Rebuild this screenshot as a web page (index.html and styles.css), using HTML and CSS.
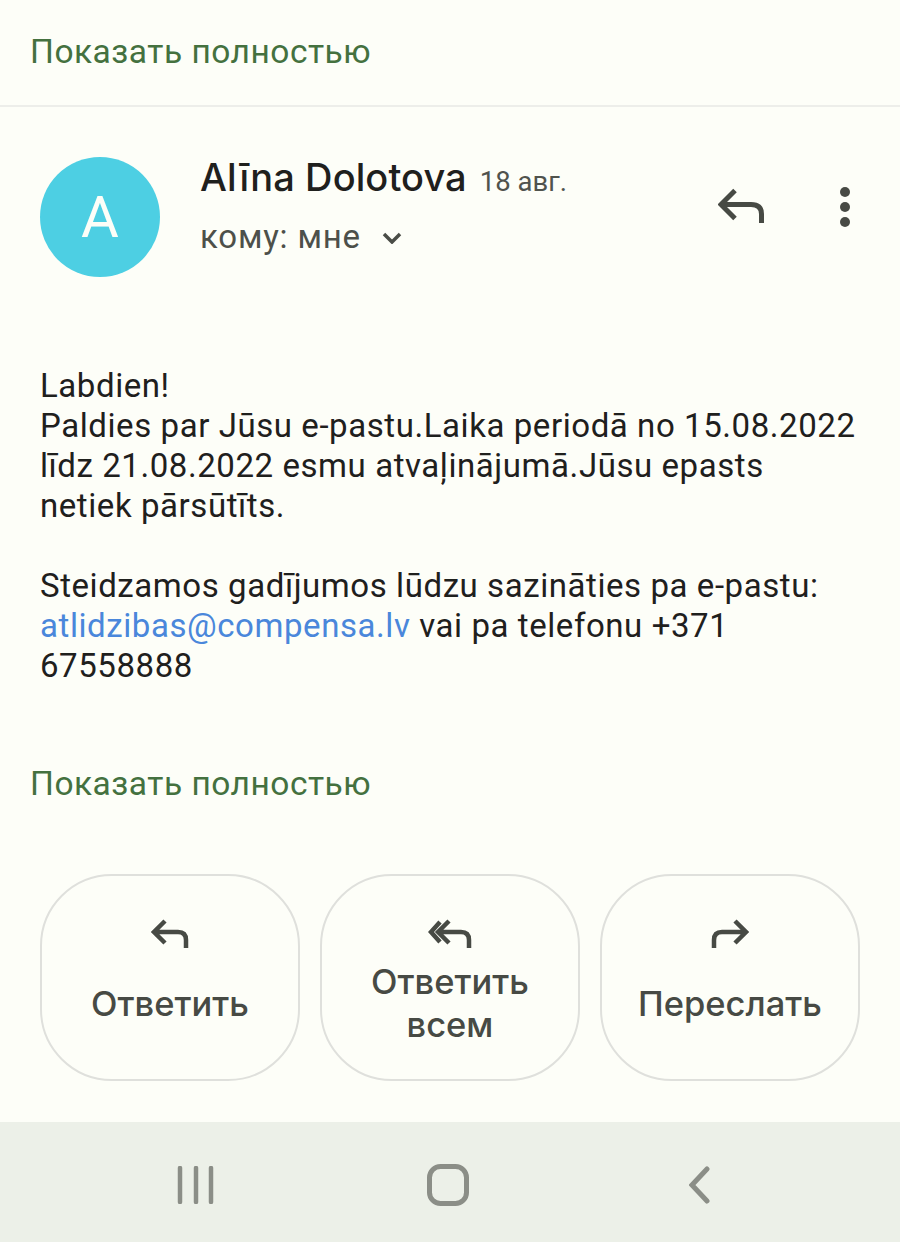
FILE: index.html
```html
<!DOCTYPE html>
<html lang="ru">
<head>
<meta charset="utf-8">
<title>Письмо</title>
<link rel="stylesheet" href="styles.css">
</head>
<body>
<main class="screen">
  <div class="top-link"><a class="show-all">Показать полностью</a></div>

  <header class="sender">
    <div class="avatar">A</div>
    <div class="meta">
      <div class="from"><span class="name">Alīna Dolotova</span><span class="date">18 авг.</span></div>
      <div class="to">кому: мне
        <svg class="chevron" viewBox="0 0 20 12" width="20" height="12"><path d="M2 2l8 8 8-8"/></svg>
      </div>
    </div>
    <div class="head-actions">
      <svg class="reply-big" viewBox="0 0 46 36" width="46" height="36"><path d="M17 2.500 3 16.500 17 30.500M3 16.500H33Q43.500 16.500 43.500 26V35"/></svg>
      <svg class="more" viewBox="0 0 10 40" width="10" height="40"><circle cx="5" cy="5" r="5"/><circle cx="5" cy="20" r="5"/><circle cx="5" cy="35" r="5"/></svg>
    </div>
  </header>

  <article class="message">
    <p>Labdien!<br>Paldies par Jūsu e-pastu.Laika periodā no 15.08.2022<br>līdz 21.08.2022 esmu atvaļinājumā.Jūsu epasts<br>netiek pārsūtīts.</p>
    <p><br>Steidzamos gadījumos lūdzu sazināties pa e-pastu:<br><a class="mail">atlidzibas@compensa.lv</a> vai pa telefonu +371<br>67558888</p>
  </article>

  <div class="bottom-link"><a class="show-all">Показать полностью</a></div>

  <section class="actions">
    <button class="action">
      <svg class="action-icon" viewBox="0 0 38 30" width="38" height="30"><path d="M14 2 3 13l11 11M3 13h24q8 0 8 8v8"/></svg>
      <span class="action-label">Ответить</span>
    </button>
    <button class="action">
      <svg class="action-icon" viewBox="0 0 44 30" width="44" height="30"><path d="M12 3 3 13l9 10M21 2 10 13l11 11M10 13h23q8 0 8 8v8"/></svg>
      <span class="action-label">Ответить всем</span>
    </button>
    <button class="action">
      <svg class="action-icon" viewBox="0 0 38 30" width="38" height="30"><path d="M24 2l11 11-11 11M35 13H11q-8 0-8 8v8"/></svg>
      <span class="action-label">Переслать</span>
    </button>
  </section>

  <nav class="navbar">
    <svg class="nav-icon nav-menu" viewBox="0 0 38 38" width="38" height="38"><path d="M3 2v34M19 2v34M34 2v34"/></svg>
    <svg class="nav-icon nav-home" viewBox="0 0 42 42" width="42" height="42"><rect x="2.500" y="2.500" width="37" height="37" rx="11"/></svg>
    <svg class="nav-icon" viewBox="0 0 21 38" width="21" height="38"><path d="M18 3 3 19l15 16"/></svg>
  </nav>
</main>
</body>
</html>
```
FILE: styles.css
```css
* { box-sizing: border-box; }

html, body {
  margin: 0;
  padding: 0;
}

body {
  background: #fdfef8;
  font-family: Roboto, "Noto Sans", sans-serif;
}

.screen {
  width: 900px;
  height: 1242px;
  display: flex;
  flex-direction: column;
  overflow: hidden;
}

.show-all {
  color: #44713f;
  font-size: 33.500px;
  line-height: 40px;
  letter-spacing: 0.5px;
}

.top-link {
  height: 107px;
  padding: 32px 0 0 30px;
  border-bottom: 2px solid #edeeea;
}

.sender {
  display: flex;
  padding: 50px 40px 0;
  height: 259px;
}

.avatar {
  width: 120px;
  height: 120px;
  flex: none;
  border-radius: 50%;
  background: #4dcfe3;
  color: #fdfef8;
  font-size: 58px;
  display: flex;
  align-items: center;
  justify-content: center;
}

.meta {
  flex: 1;
  padding: 0 0 0 40px;
}

.from {
  display: flex;
  align-items: baseline;
  gap: 13px;
  height: 44px;
  line-height: 44px;
}

.name {
  color: #1f201d;
  font-family: Inter, sans-serif;
  font-weight: 500;
  font-size: 38px;
  letter-spacing: 0.1px;
  margin-top: -2px;
}

.date {
  color: #50534d;
  font-size: 27.500px;
}

.to {
  display: flex;
  align-items: center;
  margin-top: 16px;
  color: #4d504a;
  font-size: 33px;
  line-height: 40px;
  letter-spacing: 0.8px;
}

.chevron {
  margin: 2px 0 0 21px;
  fill: none;
  stroke: #4a4d47;
  stroke-width: 3.500;
}

.head-actions {
  display: flex;
  align-items: flex-start;
  gap: 76px;
  padding-top: 30px;
  margin-right: 10px;
}

.reply-big {
  margin-top: 1px;
  fill: none;
  stroke: #474a44;
  stroke-width: 5;
}

.more {
  fill: #474a44;
}

.message {
  padding: 0 40px;
  color: #1f201d;
  font-size: 33px;
  line-height: 40px;
  letter-spacing: 0.57px;
}

.message p {
  margin: 0;
}

.mail {
  color: #4a87db;
}

.bottom-link {
  margin-top: 78px;
  padding-left: 30px;
  height: 40px;
}

.actions {
  display: flex;
  gap: 20px;
  padding: 70px 40px 0;
}

.action {
  flex: 1;
  height: 207px;
  padding: 43px 10px 22px;
  border: 2px solid #dfe0dc;
  border-radius: 72px;
  background: none;
  color: #474a44;
  font-family: Inter, sans-serif;
  font-weight: 500;
  font-size: 34.500px;
  line-height: 43px;
  display: flex;
  flex-direction: column;
  align-items: center;
}

.action-icon {
  flex: none;
  fill: none;
  stroke: #474a44;
  stroke-width: 4.500;
}

.action-label {
  flex: 1;
  display: flex;
  align-items: center;
  text-align: center;
}

.navbar {
  flex: none;
  margin-top: 41px;
  height: 120px;
  padding: 5px 190px 0 177px;
  background: #ecf0e8;
  display: flex;
  align-items: center;
  justify-content: space-between;
}

.nav-home {
  margin-right: 8px;
}

.nav-icon {
  fill: none;
  stroke: #8b8e87;
  stroke-width: 5;
  stroke-linecap: round;
}

.nav-menu {
  stroke-width: 4.500;
}
```
